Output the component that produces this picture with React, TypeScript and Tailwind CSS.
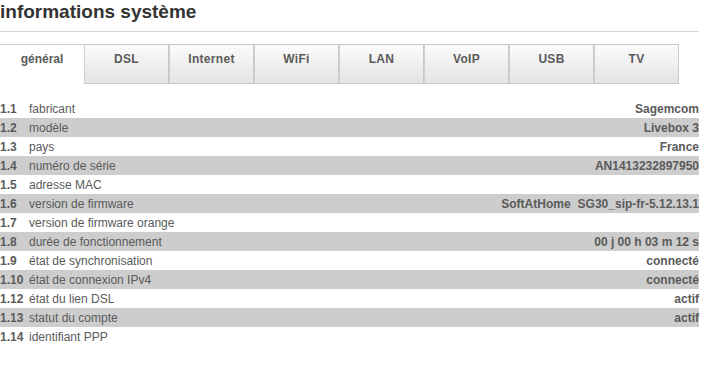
import React from "react";

const tabs = ["DSL", "Internet", "WiFi", "LAN", "VoIP", "USB", "TV"];

const rows: [string, string, React.ReactNode][] = [
  ["1.1", "fabricant", "Sagemcom"],
  ["1.2", "modèle", "Livebox 3"],
  ["1.3", "pays", "France"],
  ["1.4", "numéro de série", "AN1413232897950"],
  ["1.5", "adresse MAC", ""],
  [
    "1.6",
    "version de firmware",
    <span key="fw" className="flex gap-[7px]">
      <span>SoftAtHome</span>
      <span>SG30_sip-fr-5.12.13.1</span>
    </span>,
  ],
  ["1.7", "version de firmware orange", ""],
  ["1.8", "durée de fonctionnement", "00 j 00 h 03 m 12 s"],
  ["1.9", "état de synchronisation", "connecté"],
  ["1.10", "état de connexion IPv4", "connecté"],
  ["1.12", "état du lien DSL", "actif"],
  ["1.13", "statut du compte", "actif"],
  ["1.14", "identifiant PPP", ""],
];

export default function App() {
  return (
    <div
      className="w-[716px] h-[381px] bg-white text-[#5a5a5a] overflow-hidden"
      style={{ fontFamily: '"Liberation Sans", Arial, sans-serif' }}
    >
      <div className="w-[699px]">
        <h1 className="h-[31px] pt-[1px] text-[19px] leading-[22px] font-bold text-[#333]">
          informations système
        </h1>
        <div className="h-px bg-[#d4d4d4]" />
        <div className="mt-[12px] flex h-[40px]">
          <div className="w-[84px] border-t border-[#d0d0d0] bg-white flex justify-center pt-[7px] text-[12px] leading-[14px] font-bold text-[#5a5a5a]">
            général
          </div>
          {tabs.map((t) => (
            <div
              key={t}
              className="w-[85px] border border-l-[#d0d0d0] border-[#c8c8c8] bg-gradient-to-b from-[#fbfbfb] to-[#e4e4e4] flex justify-center pt-[7px] text-[12px] leading-[14px] font-bold text-[#5a5a5a] tracking-[0.3px]"
            >
              {t}
            </div>
          ))}
        </div>
        <div className="mt-[15px]">
          {rows.map(([n, label, value], i) => (
            <div
              key={n}
              className={`flex items-center h-[19px] text-[12px] ${
                i % 2 === 1 ? "bg-[#cdcdcd]" : ""
              }`}
            >
              <span className="w-[29px] font-bold shrink-0">{n}</span>
              <span className="flex-1">{label}</span>
              <span className="font-bold">{value}</span>
            </div>
          ))}
        </div>
      </div>
    </div>
  );
}
